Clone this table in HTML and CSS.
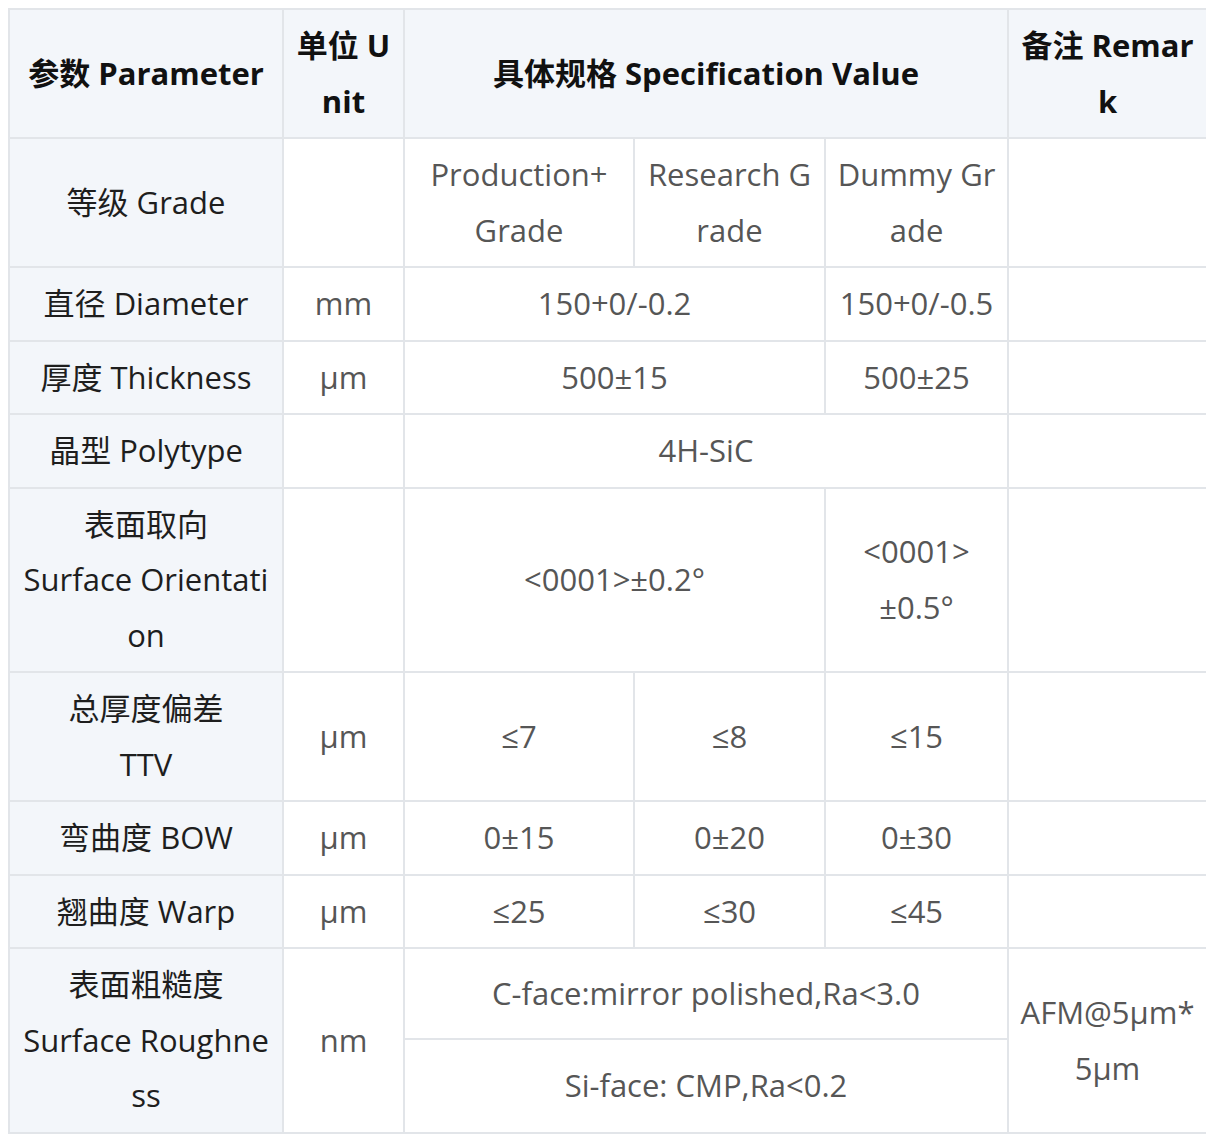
FILE: index.html
```html
<!DOCTYPE html>
<html lang="zh-CN">
<head>
<meta charset="utf-8">
<title>SiC Specification</title>
<link rel="stylesheet" href="styles.css">
</head>
<body>
<table class="spec">
  <colgroup>
    <col class="c-param">
    <col class="c-unit">
    <col class="c-v1">
    <col class="c-v2">
    <col class="c-v3">
    <col class="c-remark">
  </colgroup>
  <thead>
    <tr>
      <th>参数 Parameter</th>
      <th>单位 Unit</th>
      <th colspan="3">具体规格 Specification Value</th>
      <th>备注 Remark</th>
    </tr>
  </thead>
  <tbody>
    <tr>
      <td class="param">等级 Grade</td>
      <td></td>
      <td>Production+ Grade</td>
      <td>Research Grade</td>
      <td>Dummy Grade</td>
      <td></td>
    </tr>
    <tr>
      <td class="param">直径 Diameter</td>
      <td>mm</td>
      <td colspan="2">150+0/-0.2</td>
      <td>150+0/-0.5</td>
      <td></td>
    </tr>
    <tr>
      <td class="param">厚度 Thickness</td>
      <td>μm</td>
      <td colspan="2">500±15</td>
      <td>500±25</td>
      <td></td>
    </tr>
    <tr>
      <td class="param">晶型 Polytype</td>
      <td></td>
      <td colspan="3">4H-SiC</td>
      <td></td>
    </tr>
    <tr>
      <td class="param">表面取向<br>Surface Orientation</td>
      <td></td>
      <td colspan="2">&lt;0001&gt;±0.2°</td>
      <td>&lt;0001&gt;<br>±0.5°</td>
      <td></td>
    </tr>
    <tr>
      <td class="param">总厚度偏差<br>TTV</td>
      <td>μm</td>
      <td>≤7</td>
      <td>≤8</td>
      <td>≤15</td>
      <td></td>
    </tr>
    <tr>
      <td class="param">弯曲度 BOW</td>
      <td>μm</td>
      <td>0±15</td>
      <td>0±20</td>
      <td>0±30</td>
      <td></td>
    </tr>
    <tr>
      <td class="param">翘曲度 Warp</td>
      <td>μm</td>
      <td>≤25</td>
      <td>≤30</td>
      <td>≤45</td>
      <td></td>
    </tr>
    <tr class="r-top">
      <td class="param" rowspan="2">表面粗糙度<br>Surface Roughness</td>
      <td rowspan="2">nm</td>
      <td colspan="3">C-face:mirror polished,Ra&lt;3.0</td>
      <td rowspan="2">AFM@5μm*5μm</td>
    </tr>
    <tr class="r-bottom">
      <td colspan="3">Si-face: CMP,Ra&lt;0.2</td>
    </tr>
  </tbody>
</table>
</body>
</html>
```
FILE: styles.css
```css
html, body {
  background: #ffffff;
}
body {
  margin: 8px 6px 4px 8px;
  font-family: "Open Sans", "Noto Sans CJK SC", sans-serif;
}
.spec {
  width: 1198px;
  table-layout: fixed;
  border-collapse: collapse;
  font-size: 31px;
  line-height: 55.5px;
  color: #565656;
}
.c-param { width: 274px; }
.c-unit { width: 121px; }
.c-v1 { width: 230px; }
.c-v2 { width: 191px; }
.c-v3 { width: 183px; }
.c-remark { width: 199px; }
.spec th,
.spec td {
  border: 2px solid #e2e5e9;
  padding: 8px 11px;
  text-align: center;
  vertical-align: middle;
  word-break: break-all;
}
.spec th {
  background: #f3f6fa;
  color: #111111;
  font-weight: 700;
}
.spec td.param {
  background: #f3f6fa;
  color: #1e1e1e;
}
.r-top td { height: 73px; }
.r-bottom td { height: 76px; }
```
